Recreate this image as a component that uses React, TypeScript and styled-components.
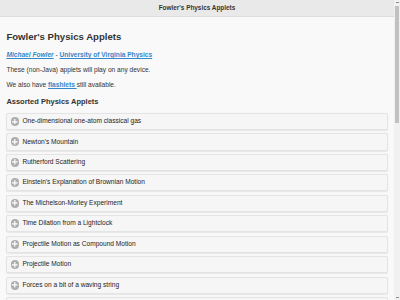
import styled, { createGlobalStyle } from "styled-components";

// page is a jQuery Mobile layout shown at 0.4 scale
const GlobalStyle = createGlobalStyle`
    html,
    body {
        margin: 0;
        padding: 0;
        background: #f9f9f9;
    }
    body {
        font-family: "Liberation Sans", Arial, sans-serif;
        font-size: 6.4px;
        line-height: 1.3;
        color: #333;
    }
`;

const Page = styled.div`
    display: flex;
    align-items: flex-start;
`;

const Main = styled.div`
    flex: 1;
    min-width: 0;
`;

// thin browser scrollbar on the right
const ScrollRail = styled.div`
    position: sticky;
    top: 0;
    width: 6px;
    height: 100vh;
    flex-shrink: 0;
    background: #f1f1f1;
    display: flex;
    flex-direction: column;
    justify-content: space-between;
`;

const ScrollTrack = styled.div`
    flex: 1;
    display: flex;
    flex-direction: column;
    padding: 0 0.6px;
`;

const ScrollButton = styled.div`
    height: 5px;
    display: flex;
    align-items: center;
    justify-content: center;
    &::after {
        content: "";
        width: 3px;
        height: 1.5px;
        background: #8a8a8a;
    }
`;

const ScrollThumb = styled.div`
    height: 117px;
    margin-top: 1px;
    background: #c1c1c1;
`;

const Header = styled.header`
    background: #e9e9e9;
    border-bottom: 1px solid #dddddd;
    height: 15.5px;
    display: flex;
    align-items: center;
    justify-content: center;
`;

const Title = styled.h1`
    margin: 0;
    font-size: 6.4px;
    font-weight: bold;
    color: #333;
    text-shadow: 0 0.4px 0 #f3f3f3;
`;

const Content = styled.main`
    padding: 6.4px;
`;

const PageTitle = styled.h2`
    font-size: 9.6px;
    font-weight: bold;
    margin: 8px 0;
`;

const Para = styled.p`
    margin: 6.4px 0;
    font-size: 6.6px;
    line-height: 8.3px;
`;

const Link = styled.a<{ $italic?: boolean }>`
    color: #3388cc;
    font-weight: bold;
    text-decoration: underline;
    font-style: ${(p) => (p.$italic ? "italic" : "normal")};
`;

const SectionTitle = styled.h3`
    font-size: 7.49px;
    font-weight: bold;
    margin: 7.49px 0 6.4px;
`;

const List = styled.div`
    display: flex;
    flex-direction: column;
    gap: 3.1px;
`;

const Item = styled.div`
    display: flex;
    align-items: center;
    gap: 3px;
    height: 17.4px;
    box-sizing: border-box;
    padding: 0 6px 0 3.2px;
    background: #f6f6f6;
    border: 1px solid #e4e4e4;
    border-radius: 2px;
    box-shadow: 0 0.4px 1.2px rgba(0, 0, 0, 0.08);
    font-size: 6.6px;
    color: #1f1f1f;
    text-shadow: 0 0.4px 0 #f3f3f3;
`;

const PlusIcon = styled.span`
    width: 8.8px;
    height: 8.8px;
    border-radius: 50%;
    background: #adadad;
    display: flex;
    align-items: center;
    justify-content: center;
    flex-shrink: 0;
`;

const applets = [
    "One-dimensional one-atom classical gas",
    "Newton's Mountain",
    "Rutherford Scattering",
    "Einstein's Explanation of Brownian Motion",
    "The Michelson-Morley Experiment",
    "Time Dilation from a Lightclock",
    "Projectile Motion as Compound Motion",
    "Projectile Motion",
    "Forces on a bit of a waving string",
    "Waves on a String",
    "Standing Waves",
    "Adding Waves",
    "Simple Harmonic Motion",
    "The Simple Pendulum",
    "Coupled Oscillators",
    "Phase Space for a Pendulum",
    "Kepler's Laws",
    "Planetary Orbits",
    "The Phases of the Moon",
    "Galilean Relativity",
    "The Doppler Effect",
    "Two-Slit Interference",
    "Diffraction Grating",
    "The Bohr Atom",
    "Hydrogen Atom Wave Functions",
    "Quantum Harmonic Oscillator",
    "Wave Packet Spreading",
    "Square Well Bound States",
    "Tunneling Through a Barrier",
    "Maxwell Distribution of Speeds",
];

const Plus = () => (
    <svg width="5.6" height="5.6" viewBox="0 0 14 14">
        <path d="M5.5 0h3v5.5H14v3H8.5V14h-3V8.5H0v-3h5.5z" fill="#fff" />
    </svg>
);

export default function App() {
    return (
        <Page>
            <GlobalStyle />
            <Main>
                <Header>
                    <Title>Fowler's Physics Applets</Title>
                </Header>
                <Content>
                    <PageTitle>Fowler's Physics Applets</PageTitle>
                    <Para>
                        <Link $italic>Michael Fowler</Link> -{" "}
                        <Link>University of Virginia Physics</Link>
                    </Para>
                    <Para>These (non-Java) applets will play on any device.</Para>
                    <Para>
                        We also have <Link>flashlets </Link>still available.
                    </Para>
                    <SectionTitle>Assorted Physics Applets</SectionTitle>
                    <List>
                        {applets.map((name) => (
                            <Item key={name}>
                                <PlusIcon>
                                    <Plus />
                                </PlusIcon>
                                {name}
                            </Item>
                        ))}
                    </List>
                </Content>
            </Main>
            <ScrollRail>
                <ScrollButton />
                <ScrollTrack>
                    <ScrollThumb />
                </ScrollTrack>
                <ScrollButton />
            </ScrollRail>
        </Page>
    );
}
